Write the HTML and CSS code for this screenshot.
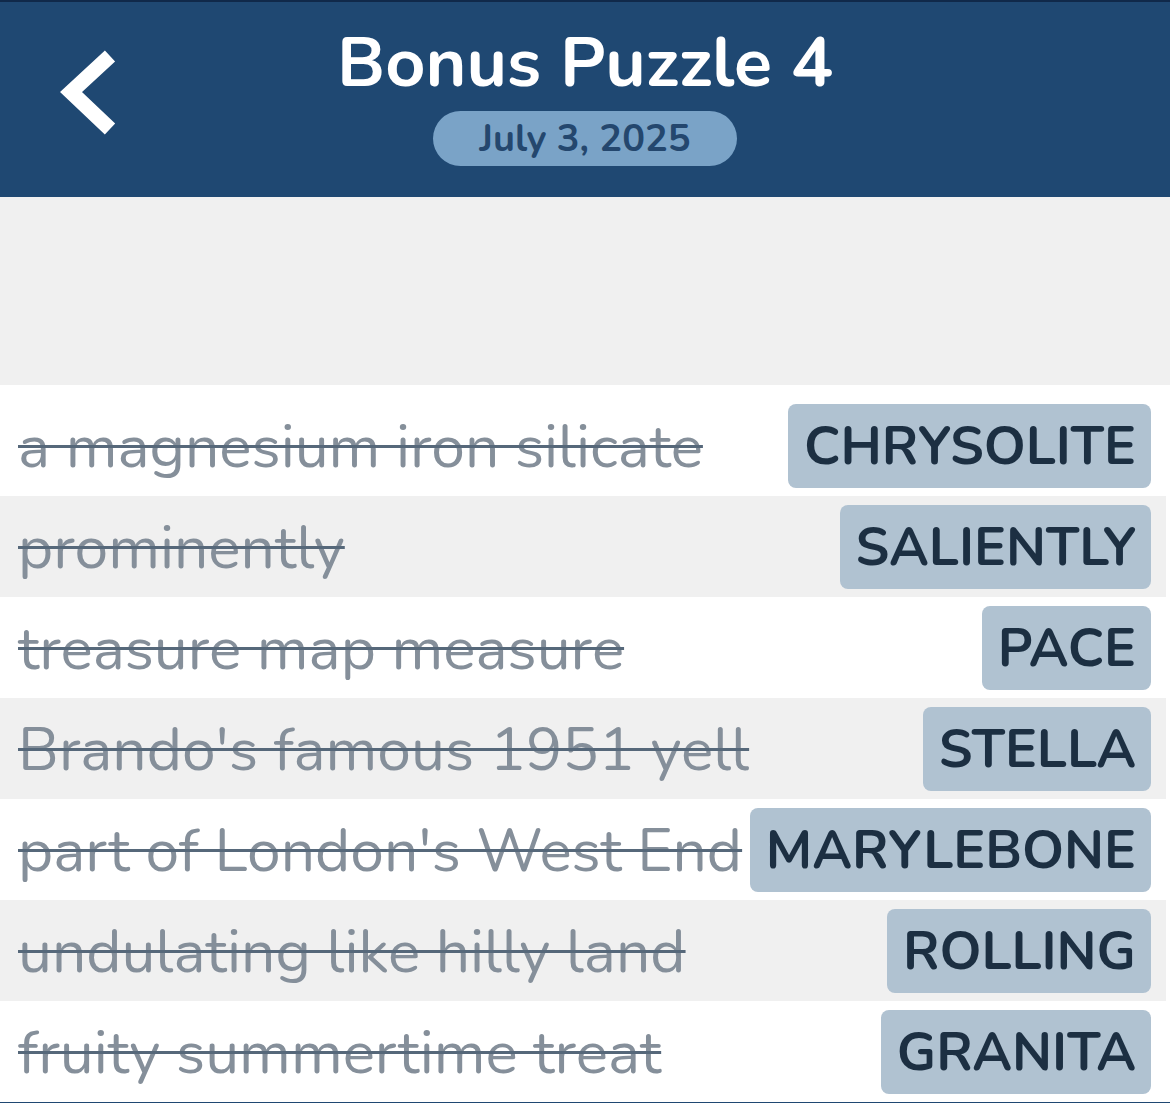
FILE: index.html
```html
<!DOCTYPE html>
<html lang="en">
<head>
<meta charset="utf-8">
<title>Bonus Puzzle 4</title>
<link rel="stylesheet" href="styles.css">
</head>
<body>
<div class="app">
  <header class="topbar">
    <div class="back">
      <svg class="chev" width="70" height="95" viewBox="0 0 70 95" aria-hidden="true">
        <polyline points="60,11 21,47 60,84" fill="none" stroke="#ffffff" stroke-width="15" stroke-linejoin="miter" stroke-linecap="butt"/>
      </svg>
    </div>
    <div class="heading">
      <h1 class="title">Bonus Puzzle 4</h1>
      <div class="date">July 3, 2025</div>
    </div>
    <div class="side"></div>
  </header>
  <div class="spacer"></div>
  <ul class="clues">
    <li class="row first"><span class="clue">a magnesium iron silicate</span><span class="answer">CHRYSOLITE</span></li>
    <li class="row alt"><span class="clue">prominently</span><span class="answer">SALIENTLY</span></li>
    <li class="row"><span class="clue">treasure map measure</span><span class="answer">PACE</span></li>
    <li class="row alt"><span class="clue">Brando's famous 1951 yell</span><span class="answer">STELLA</span></li>
    <li class="row"><span class="clue">part of London's West End</span><span class="answer">MARYLEBONE</span></li>
    <li class="row alt"><span class="clue">undulating like hilly land</span><span class="answer">ROLLING</span></li>
    <li class="row"><span class="clue">fruity summertime treat</span><span class="answer">GRANITA</span></li>
  </ul>
  <div class="bottombar"></div>
</div>
</body>
</html>
```

FILE: styles.css
```css
html, body {
  margin: 0;
  padding: 0;
  background: #ffffff;
}
body {
  font-family: "Nunito", "Lato", "Open Sans", sans-serif;
  width: 1170px;
  height: 1103px;
  overflow: hidden;
}
.app {
  display: flex;
  flex-direction: column;
  width: 1170px;
}
.topbar {
  height: 197px;
  box-sizing: border-box;
  background: #1f4872;
  border-top: 2px solid #10294a;
  display: grid;
  grid-template-columns: 1fr auto 1fr;
  align-items: start;
}
.back {
  padding-top: 43px;
  padding-left: 50px;
}
.chev {
  display: block;
}
.heading {
  display: flex;
  flex-direction: column;
  align-items: center;
}
.title {
  margin: 17px 0 0 0;
  color: #ffffff;
  font-weight: 700;
  font-size: 70px;
  line-height: 88px;
  letter-spacing: 0px;
}
.date {
  margin-top: 4px;
  width: 304px;
  height: 55px;
  border-radius: 28px;
  background: #7aa3c7;
  color: #24476e;
  font-size: 38px;
  font-weight: 700;
  display: flex;
  align-items: center;
  justify-content: center;
}
.spacer {
  height: 188px;
  background: #f0f0f0;
}
.clues {
  list-style: none;
  margin: 0;
  padding: 0;
  width: 1166px;
}
.row {
  height: 101px;
  box-sizing: border-box;
  display: flex;
  align-items: center;
  justify-content: space-between;
  gap: 2px;
  padding: 9px 15px 8px 18px;
  background: #ffffff;
}
.row.first {
  height: 111px;
  padding-top: 19px;
}
.row.alt {
  background: #f0f0f0;
}
.clue {
  color: #858f9a;
  font-size: 60.5px;
  white-space: nowrap;
  text-decoration: line-through;
  text-decoration-color: #56687a;
  text-decoration-thickness: 3px;
  padding-top: 2px;
}
.answer {
  flex-shrink: 0;
  height: 84px;
  box-sizing: border-box;
  display: flex;
  align-items: center;
  padding: 0 15px 0 16px;
  background: #b0c2d1;
  border-radius: 8px;
  color: #1c2f42;
  font-weight: 700;
  font-size: 53.5px;
  white-space: nowrap;
}
.bottombar {
  height: 3px;
  background: #1f4872;
}
```
